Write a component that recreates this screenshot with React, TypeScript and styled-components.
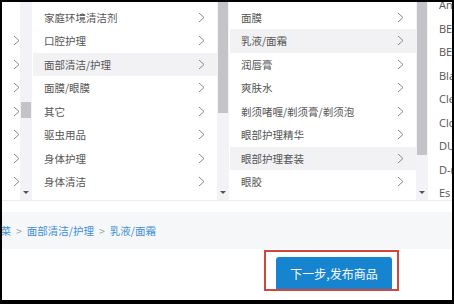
import styled, { createGlobalStyle } from "styled-components";

const GlobalStyle = createGlobalStyle`
  html, body { margin: 0; padding: 0; }
  body {
    font-family: "Noto Sans CJK SC", "Noto Sans", sans-serif;
    background: #000;
  }
`;

interface Row {
  label: string;
  active?: boolean;
  hover?: boolean;
  arrow?: boolean;
}

interface ColumnDef {
  width: number;
  rows: Row[];
  thumbTop: number;
  thumbHeight: number;
}

const columns: ColumnDef[] = [
  {
    width: 31,
    thumbTop: 100,
    thumbHeight: 16,
    rows: [
      { label: "", arrow: false },
      { label: "" },
      { label: "" },
      { label: "" },
      { label: "" },
      { label: "" },
      { label: "" },
      { label: "" }
    ]
  },
  {
    width: 197,
    thumbTop: 0,
    thumbHeight: 111,
    rows: [
      { label: "家庭环境清洁剂" },
      { label: "口腔护理" },
      { label: "面部清洁/护理", active: true },
      { label: "面膜/眼膜" },
      { label: "其它" },
      { label: "驱虫用品" },
      { label: "身体护理" },
      { label: "身体清洁" }
    ]
  },
  {
    width: 199,
    thumbTop: 0,
    thumbHeight: 153,
    rows: [
      { label: "面膜" },
      { label: "乳液/面霜", active: true },
      { label: "润唇膏" },
      { label: "爽肤水" },
      { label: "剃须啫喱/剃须膏/剃须泡" },
      { label: "眼部护理精华" },
      { label: "眼部护理套装", hover: true },
      { label: "眼胶" },
      { label: "…", arrow: false }
    ]
  }
];

const brands = ["Ani", "BEST", "BEST", "Black", "Clean", "Clov", "DUO", "D-ray", "Es"];

const Chevron = () => (
  <svg width="7" height="11" viewBox="0 0 7 11">
    <polyline points="1,1 6,5.5 1,10" fill="none" stroke="#8a8a8a" strokeWidth="1" />
  </svg>
);

const App = () => (
  <Frame>
    <GlobalStyle />
    <Page>
      <Columns>
        {columns.map((col, ci) => (
          <Column key={ci} width={col.width}>
            <List>
              {col.rows.map((row, ri) => (
                <Item key={ri} active={!!row.active} hover={!!row.hover}>
                  <span>{row.label}</span>
                  {row.arrow !== false && <Chevron />}
                </Item>
              ))}
            </List>
            <Track>
              <Thumb top={col.thumbTop} size={col.thumbHeight} />
              <DownArrow />
            </Track>
          </Column>
        ))}
        <BrandList>
          {brands.map((b, i) => (
            <Brand key={i}>{b}</Brand>
          ))}
        </BrandList>
      </Columns>
      <Crumbs>
        <CrumbText>
          蔬菜<Sep>&gt;</Sep>面部清洁/护理<Sep>&gt;</Sep>乳液/面霜
        </CrumbText>
      </Crumbs>
      <Actions>
        <Highlight>
          <NextButton>下一步,发布商品</NextButton>
        </Highlight>
      </Actions>
    </Page>
  </Frame>
);

const Frame = styled.div`
  width: 454px;
  height: 304px;
  box-sizing: border-box;
  padding: 2px 2px 4px 2px;
  background: #000;
`;

const Page = styled.div`
  height: 100%;
  background: #fff;
  display: flex;
  flex-direction: column;
  overflow: hidden;
`;

const Columns = styled.div`
  height: 198px;
  flex: none;
  display: flex;
  border-bottom: 1px solid #ececec;
  overflow: hidden;
`;

const Column = styled.div<{ width: number }>`
  width: ${({ width }) => width}px;
  flex: none;
  display: flex;
  padding-right: 1px;
  box-sizing: border-box;
`;

const List = styled.div`
  flex: 1;
  padding-top: 3.5px;
  overflow: hidden;
`;

const Item = styled.div<{ active: boolean; hover: boolean }>`
  height: 23.5px;
  display: flex;
  align-items: center;
  justify-content: space-between;
  padding: 0 12px 0 11px;
  box-sizing: border-box;
  font-size: 10.5px;
  color: #555;
  white-space: nowrap;
  background: ${({ active, hover }) => (active || hover ? "#f2f2f4" : "transparent")};
  border-left: 2px solid ${({ active }) => (active ? "#2b8bd3" : "transparent")};
  margin-left: -2px;

  svg {
    flex: none;
  }
`;

const Track = styled.div`
  width: 12px;
  flex: none;
  background: #f3f2f6;
  display: flex;
  flex-direction: column;
  align-items: center;
`;

const Thumb = styled.div<{ top: number; size: number }>`
  width: 10px;
  margin-top: ${({ top }) => top}px;
  height: ${({ size }) => size}px;
  background: #c4c3c8;
`;

const DownArrow = styled.div`
  margin-top: auto;
  margin-bottom: 6px;
  width: 0;
  height: 0;
  border-left: 3px solid transparent;
  border-right: 3px solid transparent;
  border-top: 3px solid #555;
`;

const BrandList = styled.div`
  flex: 1;
  margin-top: -9px;
  padding-left: 10px;
  overflow: hidden;
`;

const Brand = styled.div`
  height: 23.5px;
  line-height: 23.5px;
  font-family: "Open Sans", "Noto Sans", sans-serif;
  font-size: 11px;
  color: #555;
  white-space: nowrap;
`;

const Crumbs = styled.div`
  margin-top: 11px;
  height: 37px;
  flex: none;
  background: #f6f7f9;
  display: flex;
  align-items: center;
  overflow: hidden;
`;

const CrumbText = styled.div`
  margin-left: -12px;
  font-size: 10.5px;
  color: #3d8fd6;
  white-space: nowrap;
`;

const Sep = styled.span`
  color: #9a9a9a;
  margin: 0 5px;
`;

const Actions = styled.div`
  display: flex;
  justify-content: flex-end;
  padding: 1px 53px 0 0;
`;

const Highlight = styled.div`
  border: 2px solid #d24640;
  padding: 5px 5px 0 10px;
  height: 41px;
  box-sizing: border-box;
  display: flex;
`;

const NextButton = styled.button`
  width: 116px;
  border: none;
  border-radius: 3px 3px 0 0;
  background: #1784d0;
  color: #fff;
  font-family: "Noto Sans CJK SC", sans-serif;
  font-size: 12px;
  padding: 0;
`;

export default App;
